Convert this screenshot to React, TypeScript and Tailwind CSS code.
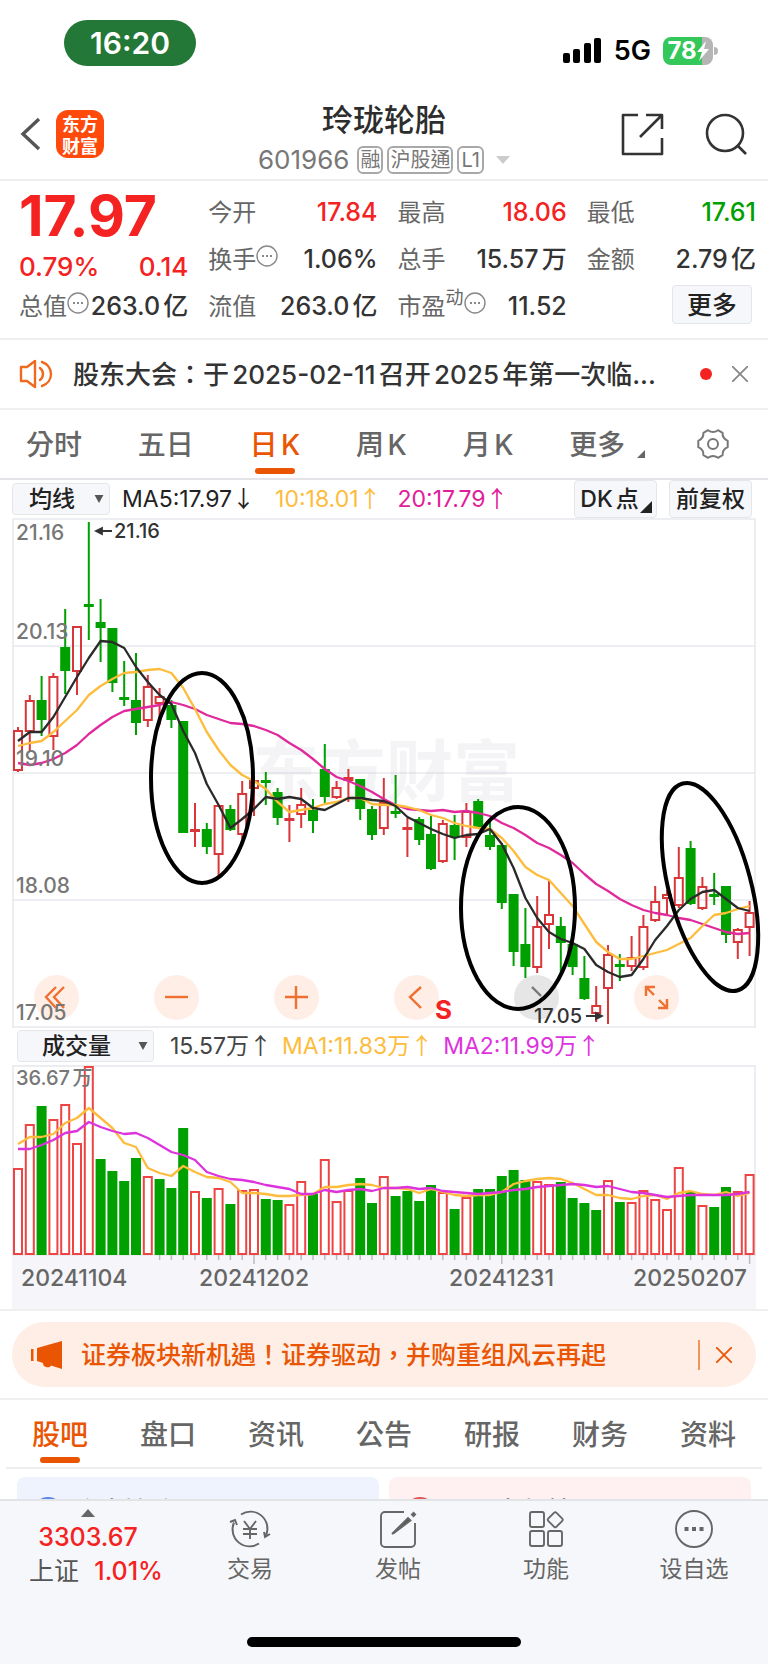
import { useState } from "react";
import type { ReactNode } from "react";
import clsx from "clsx";

type Kind = "up" | "down";
// kind, high, body top, body bottom, low
type Candle = [Kind, number, number, number, number];
type Volume = [Kind, number];

const STEP = 11.8;
const PRICE_HEIGHT = 509;
const VOLUME_HEIGHT = 190;
const AXIS_HEIGHT = 54;

const candles: Candle[] = [
  ["up", 209, 212, 253, 254], ["up", 177, 182, 214, 234], ["down", 158, 182, 202, 218], ["up", 155, 158, 219, 232],
  ["down", 91, 129, 153, 176], ["up", 108, 108, 154, 177], ["down", 4, 86, 88, 122], ["down", 81, 104, 110, 144],
  ["down", 110, 110, 165, 174], ["down", 143, 179, 181, 188], ["down", 135, 182, 205, 217], ["up", 157, 168, 203, 209],
  ["up", 170, 178, 186, 207], ["down", 182, 187, 202, 210], ["down", 203, 203, 315, 315], ["up", 285, 311, 313, 329],
  ["down", 305, 311, 329, 336], ["up", 287, 287, 337, 360], ["down", 287, 291, 312, 313], ["up", 263, 275, 317, 321],
  ["up", 260, 262, 271, 298], ["down", 254, 262, 264, 287], ["down", 270, 274, 300, 307], ["up", 287, 300, 302, 324],
  ["up", 270, 286, 297, 310], ["down", 281, 292, 303, 315], ["down", 226, 251, 279, 285], ["up", 263, 269, 280, 281],
  ["up", 251, 259, 263, 284], ["down", 261, 261, 291, 302], ["down", 288, 291, 317, 322], ["up", 260, 284, 311, 317],
  ["down", 257, 293, 295, 300], ["up", 300, 309, 311, 339], ["down", 299, 301, 322, 327], ["down", 298, 316, 351, 352],
  ["up", 302, 305, 344, 345], ["down", 297, 307, 319, 342], ["up", 285, 293, 320, 329], ["down", 281, 283, 310, 311],
  ["down", 304, 317, 329, 332], ["down", 325, 327, 385, 391], ["down", 376, 376, 434, 448], ["down", 390, 426, 449, 460],
  ["up", 378, 408, 450, 455], ["up", 362, 396, 407, 431], ["down", 399, 408, 425, 455], ["down", 425, 426, 449, 457],
  ["down", 438, 460, 481, 482], ["up", 468, 487, 496, 504], ["up", 427, 436, 471, 506], ["down", 436, 446, 448, 463],
  ["up", 418, 439, 449, 453], ["up", 397, 408, 450, 452], ["up", 368, 383, 403, 404], ["up", 372, 376, 381, 398],
  ["up", 329, 359, 388, 390], ["down", 323, 330, 386, 387], ["up", 359, 368, 391, 392], ["down", 355, 376, 377, 387],
  ["down", 368, 368, 417, 425], ["up", 410, 411, 425, 441], ["up", 383, 394, 410, 438],
];

const ma5 = [
  223, 214, 214, 199, 179, 159, 140, 123, 124, 130, 149, 164, 177, 186, 213, 235, 266, 287, 310, 301, 291, 279, 281, 279, 281, 290, 292, 286, 280, 280, 282,
  283, 288, 299, 305, 311, 316, 320, 317, 316, 311, 326, 350, 380, 400, 414, 421, 425, 431, 447, 454, 459, 457, 441, 422, 408, 392, 381, 374, 372, 381, 390, 393,
];
const ma10 = [
  228, 225, 223, 214, 203, 192, 177, 168, 161, 155, 154, 152, 151, 155, 170, 191, 214, 232, 247, 257, 263, 271, 284, 294, 292, 290, 286, 284, 280, 280, 286,
  287, 287, 289, 292, 297, 300, 305, 308, 310, 311, 320, 333, 349, 357, 362, 375, 388, 406, 424, 434, 441, 441, 438, 435, 432, 426, 420, 408, 397, 395, 391, 388,
];
const ma20 = [
  245, 247, 245, 241, 235, 227, 216, 207, 199, 193, 191, 189, 187, 184, 187, 191, 197, 201, 205, 206, 208, 212, 217, 225, 232, 241, 251, 259, 263, 268, 274,
  281, 287, 291, 292, 293, 292, 294, 293, 295, 298, 305, 310, 317, 325, 330, 337, 345, 356, 366, 373, 381, 387, 392, 395, 397, 400, 402, 406, 410, 414, 416, 415,
];

const volumes: Volume[] = [
  ["up", 103], ["up", 59], ["down", 41], ["up", 54], ["up", 39], ["up", 78], ["up", 1], ["down", 94], ["down", 106],
  ["down", 116], ["down", 93], ["up", 111], ["down", 114], ["down", 123], ["down", 63], ["up", 126], ["down", 133], ["up", 123],
  ["down", 139], ["up", 125], ["up", 124], ["down", 134], ["down", 135], ["up", 139], ["up", 116], ["down", 129], ["up", 94],
  ["up", 136], ["up", 125], ["down", 113], ["down", 138], ["up", 111], ["down", 131], ["down", 126], ["down", 136], ["down", 120],
  ["up", 127], ["down", 144], ["up", 132], ["down", 124], ["down", 124], ["down", 111], ["down", 105], ["down", 115], ["up", 116],
  ["up", 119], ["down", 117], ["down", 133], ["down", 138], ["down", 145], ["up", 115], ["down", 137], ["up", 137], ["up", 125],
  ["up", 134], ["up", 144], ["up", 102], ["down", 127], ["up", 140], ["down", 142], ["down", 122], ["up", 126], ["up", 109],
];
const volMa1 = [
  79, 72, 72, 69, 58, 53, 43, 53, 63, 78, 82, 103, 108, 111, 101, 107, 112, 113, 117, 128, 128, 129, 131, 131, 130, 129, 122, 122, 120, 119, 120,
  123, 123, 124, 128, 124, 127, 130, 131, 130, 130, 127, 119, 116, 114, 113, 114, 118, 124, 130, 130, 133, 134, 131, 130, 134, 128, 126, 129, 130, 127, 131, 128,
];
const volMa2 = [
  84, 84, 80, 75, 68, 66, 57, 62, 66, 69, 68, 73, 80, 87, 90, 95, 107, 111, 114, 115, 117, 120, 122, 124, 129, 129, 125, 127, 125, 124, 126,
  123, 123, 122, 124, 123, 126, 127, 128, 129, 128, 127, 125, 124, 122, 121, 120, 119, 120, 122, 121, 124, 127, 128, 130, 132, 131, 130, 130, 130, 130, 129, 127,
];

const RED = "#d9363a";
const GREEN = "#00a000";

const xAt = (i: number) => 6 + i * STEP;
const toPoints = (values: number[]) => values.map((y, i) => `${xAt(i).toFixed(1)},${y}`).join(" ");

function MoreDots() {
  return (
    <svg viewBox="0 0 22 22" className="-mt-2 h-[22px] w-[22px] shrink-0" fill="none" stroke="#888" strokeWidth="1.4">
      <circle cx="11" cy="11" r="10" />
      <path d="M6 11h2M10 11h2M14 11h2" strokeWidth="2" />
    </svg>
  );
}

function StatusBar() {
  return (
    <div className="flex h-[88px] items-start justify-between pt-5 pr-[50px] pl-16">
      <div className="flex h-[46px] w-[132px] items-center justify-center rounded-full bg-[#237837] text-3xl font-semibold text-white">16:20</div>
      <div className="flex h-[62px] items-center gap-3">
        <svg viewBox="0 0 40 26" className="h-[26px] w-10">
          <rect x="1" y="15" width="7" height="10" rx="2" />
          <rect x="11" y="11" width="7" height="14" rx="2" />
          <rect x="22" y="5" width="7" height="20" rx="2" />
          <rect x="32" y="0" width="7" height="25" rx="2" />
        </svg>
        <span className="text-[27px] font-semibold text-black">5G</span>
        <div className="flex items-center gap-px">
          <div className="flex h-7 w-[50px] items-center justify-center rounded-lg bg-linear-to-r from-[#34c759] from-78% to-[#b5b5b5] to-78% text-2xl font-bold text-white">
            78
            <svg viewBox="0 0 12 20" className="h-5 w-3" fill="#fff">
              <path d="M9 0 0 11h5l-3 9L12 8H7z" />
            </svg>
          </div>
          <div className="h-2 w-1 rounded-r-full bg-[#b5b5b5]" />
        </div>
      </div>
    </div>
  );
}

function Header() {
  return (
    <header className="grid h-[93px] grid-cols-[1fr_auto_1fr] border-b-2 border-[#efefef] px-5">
      <div className="flex items-center gap-3.5">
        <button aria-label="返回">
          <svg viewBox="0 0 22 36" className="h-9 w-[22px]" fill="none" stroke="#555" strokeWidth="3.4">
            <path d="M19 3 3 18l16 15" />
          </svg>
        </button>
        <div className="w-12 rounded-xl bg-[#ff4a0c] py-0.5 text-center font-['Noto_Sans_CJK_SC',sans-serif] text-lg leading-[22px] font-bold text-white">
          东方<br />财富
        </div>
      </div>
      <div className="flex flex-col items-center pt-3">
        <h1 className="text-[31px] leading-10 font-medium text-[#2d2d2d]">玲珑轮胎</h1>
        <div className="flex items-center gap-1 pt-1 text-[#777]">
          <span className="mr-1 text-[26px] leading-8">601966</span>
          <span className="rounded-md border-2 border-[#a8a8a8] px-px text-xl leading-6">融</span>
          <span className="rounded-md border-2 border-[#a8a8a8] px-px text-xl leading-6">沪股通</span>
          <span className="rounded-md border-2 border-[#a8a8a8] px-0.5 text-xl leading-6">L1</span>
          <svg viewBox="0 0 14 8" className="ml-2 h-2 w-3.5" fill="#ccc">
            <path d="M0 0h14L7 8z" />
          </svg>
        </div>
      </div>
      <div className="flex items-center justify-end gap-10">
        <button aria-label="分享">
          <svg viewBox="0 0 44 44" className="h-11 w-11" fill="none" stroke="#333" strokeWidth="2.6" strokeLinejoin="round">
            <path d="M18 3H3v39h39V26M26 3h16v14M42 3 20 25" />
          </svg>
        </button>
        <button aria-label="搜索">
          <svg viewBox="0 0 44 44" className="h-11 w-11" fill="none" stroke="#333" strokeWidth="2.6">
            <circle cx="21" cy="21" r="18" />
            <path d="m33 33 9 9" />
          </svg>
        </button>
      </div>
    </header>
  );
}

function Quote({ label, value, tone = "text-[#333]", extra, sup }: { label: string; value: string; tone?: string; extra?: boolean; sup?: string }) {
  return (
    <div className="flex items-center justify-between whitespace-nowrap">
      <dt className="flex items-center text-[#666]">
        {label}
        {sup && <sup className="text-lg">{sup}</sup>}
        {extra && <MoreDots />}
      </dt>
      <dd className={clsx("text-[25px] font-medium", tone)}>{value}</dd>
    </div>
  );
}

function QuotePanel() {
  return (
    <section className="grid h-[159px] grid-cols-4 gap-x-5 border-b-2 border-[#efefef] pt-2 pr-3 pl-[19px] text-2xl leading-[47px]">
      <div>
        <div className="h-[61px] text-[57px] leading-[54px] font-bold text-[#f52222]">17.97</div>
        <div className="flex h-[33px] items-center justify-between text-[26px] font-medium text-[#f52222]">
          <span>0.79%</span>
          <span>0.14</span>
        </div>
        <dl><Quote label="总值" value="263.0亿" extra /></dl>
      </div>
      <dl>
        <Quote label="今开" value="17.84" tone="text-[#f52222]" />
        <Quote label="换手" value="1.06%" extra />
        <Quote label="流值" value="263.0亿" />
      </dl>
      <dl>
        <Quote label="最高" value="18.06" tone="text-[#f52222]" />
        <Quote label="总手" value="15.57万" />
        <Quote label="市盈" value="11.52" sup="动" extra />
      </dl>
      <div>
        <dl>
          <Quote label="最低" value="17.61" tone="text-[#00a000]" />
          <Quote label="金额" value="2.79亿" />
        </dl>
        <div className="flex justify-end pt-0.5 pr-1">
          <button className="h-[39px] w-20 rounded border border-[#e4e6ea] bg-[#f6f7fa] text-[25px] leading-9 font-medium text-[#222]">更多</button>
        </div>
      </div>
    </section>
  );
}

function Notice() {
  return (
    <section className="flex h-[70px] items-center border-b-2 border-[#efefef] pr-5 pl-[19px]">
      <svg viewBox="0 0 34 30" className="h-[30px] w-[34px] shrink-0" fill="none" stroke="#ee6a1e" strokeWidth="2.4" strokeLinejoin="round" strokeLinecap="round">
        <path d="M2 8h6l8-6v26l-8-6H2zM21 9c4 3 4 9 0 12M23 3c12 4 12 20 0 24" />
      </svg>
      <a href="#notice" className="ml-5 flex-1 truncate text-[26px] font-medium text-[#333]">股东大会：于2025-02-11召开2025年第一次临...</a>
      <span className="mr-5 h-3 w-3 rounded-full bg-[#f52222]" />
      <button aria-label="关闭公告">
        <svg viewBox="0 0 16 16" className="h-4 w-4" stroke="#888" strokeWidth="1.8">
          <path d="m0 0 16 16M16 0 0 16" />
        </svg>
      </button>
    </section>
  );
}

function PeriodTabs() {
  const [active, setActive] = useState("日K");
  return (
    <nav className="flex h-[70px] items-stretch justify-between border-b-2 border-[#e4e4e8] pr-[39px] pl-[26px] text-[28px] font-medium">
      {["分时", "五日", "日K", "周K", "月K", "更多"].map((tab) => (
        <button key={tab} onClick={() => setActive(tab)} className={clsx("relative pt-0.5", active === tab ? "text-[#ea5504]" : "text-[#666]")}>
          {tab}
          {tab === "更多" && (
            <svg viewBox="0 0 8 8" className="absolute -right-5 bottom-5 h-2 w-2" fill="#666">
              <path d="M8 0v8H0z" />
            </svg>
          )}
          {active === tab && <span className="absolute bottom-1 left-1/2 h-1.5 w-10 -translate-x-1/2 rounded-full bg-[#ea5504]" />}
        </button>
      ))}
      <button aria-label="设置" className="ml-4">
        <svg viewBox="0 0 32 32" className="h-8 w-8" fill="none" stroke="#777" strokeWidth="2" strokeLinejoin="round">
          <circle cx="16" cy="16" r="5" />
          <path d="M11 2.2q5 3.6 10 0l4.6 2.6q-.4 5.6 5.1 8v6.4q-5.5 2.4-5.1 8L21 29.8q-5-3.6-10 0l-4.6-2.6q.4-5.6-5.1-8v-6.4q5.500-2.400 5.100-8z" />
        </svg>
      </button>
    </nav>
  );
}

function Picker({ label, value, className }: { label: string; value: string; className: string }) {
  return (
    <div className={clsx("relative", className)}>
      <select aria-label={label} className="h-8 w-full appearance-none rounded border border-[#e4e6ea] bg-[#f6f7fa] pr-[18px] text-center text-[23px] leading-7 font-medium text-[#222]">
        <option>{value}</option>
      </select>
      <svg viewBox="0 0 10 9" className="pointer-events-none absolute top-3 right-1.5 h-2 w-2.5" fill="#555">
        <path d="M0 0h10L5 9z" />
      </svg>
    </div>
  );
}

function Indicator({ value, trend, className }: { value: string; trend: "↑" | "↓"; className: string }) {
  return (
    <span className={clsx("text-[23px] whitespace-nowrap [text-autospace:no-autospace]", className)}>
      {value}
      <span className="font-['Noto_Sans_CJK_SC',sans-serif] leading-8">{trend}</span>
    </span>
  );
}

function IndicatorBar() {
  return (
    <div className="flex h-[38px] items-center pr-4 pl-3">
      <Picker label="主图指标" value="均线" className="w-[98px]" />
      <Indicator value="MA5:17.97" trend="↓" className="ml-3 text-[#222]" />
      <Indicator value="10:18.01" trend="↑" className="ml-5 text-[#fdbc3c]" />
      <Indicator value="20:17.79" trend="↑" className="ml-4 text-[#e0209a]" />
      <button className="relative ml-auto h-[38px] w-[83px] rounded border border-[#e4e6ea] bg-[#f6f7fa] pr-3 text-[23px] leading-8 font-medium text-[#222]">
        DK点
        <svg viewBox="0 0 12 12" className="absolute right-1 bottom-1 h-3 w-3" fill="#222">
          <path d="M12 0v12H0z" />
        </svg>
      </button>
      <button className="ml-3 h-[38px] w-[83px] rounded border border-[#e4e6ea] bg-[#f6f7fa] text-[23px] leading-8 font-medium text-[#222]">前复权</button>
    </div>
  );
}

function ChartButton({ label, muted, children }: { label: string; muted?: boolean; children: ReactNode }) {
  return (
    <button aria-label={label} className={clsx("h-[45px] w-[45px] rounded-full", muted ? "bg-[#e6e6e6]" : "bg-[#feeee5]")}>
      <svg viewBox="0 0 45 45" fill="none" stroke={muted ? "#777" : "#f07030"} strokeWidth="2.4">
        {children}
      </svg>
    </button>
  );
}

function PriceChart() {
  return (
    <div className="relative mx-3">
      <div className="absolute inset-x-[22px] bottom-[7px] flex justify-between pr-[55px]">
        <ChartButton label="最早"><path d="M22 12 12 22l10 11M30 12 20 22l10 11" /></ChartButton>
        <ChartButton label="缩小"><path d="M11 22h23" /></ChartButton>
        <ChartButton label="放大"><path d="M11 22h23M22 11v23" /></ChartButton>
        <ChartButton label="向左"><path d="M27 12 16 22l11 11" /></ChartButton>
        <ChartButton label="向右" muted><path d="m18 12 9 9" /></ChartButton>
        <ChartButton label="全屏"><path d="M21 12h-9v9M12 12l8 8M24 33h9v-9M33 33l-8-8" /></ChartButton>
      </div>
      <svg viewBox={`0 0 744 ${PRICE_HEIGHT}`} className="pointer-events-none relative block h-auto w-full overflow-visible font-medium">
        <g stroke="#e8e9ee" strokeWidth="1.5" fill="none">
          <rect x="1" y="1" width="742" height={PRICE_HEIGHT - 1} />
          <path d="M0 128h744M0 255h744M0 382h744" />
        </g>
        <text x="240" y="278" fontSize="67" fontWeight="700" fill="#c8c8d0" fillOpacity="0.2">东方财富</text>
        {candles.map(([kind, high, top, bottom, low], i) => {
          const x = xAt(i);
          const color = kind === "up" ? RED : GREEN;
          return (
            <g key={i} stroke={color} strokeWidth="2" fill={kind === "up" ? "none" : color}>
              <path d={`M${x} ${high}V${top}M${x} ${bottom}V${low}`} />
              <rect x={x - 4} y={top + 1} width="8" height={Math.max(bottom - top - 2, 1)} />
            </g>
          );
        })}
        <g fill="none" strokeWidth="2.3" strokeLinejoin="round">
          <polyline points={toPoints(ma20)} stroke="#e02a9c" />
          <polyline points={toPoints(ma10)} stroke="#fdbc3c" />
          <polyline points={toPoints(ma5)} stroke="#2a2a2a" />
        </g>
        <g fill="none" stroke="#000" strokeWidth="4">
          <ellipse cx="190" cy="260" rx="51" ry="105" />
          <ellipse cx="506" cy="390" rx="57" ry="101" />
          <ellipse cx="698" cy="369" rx="41" ry="107" transform="rotate(-14.8 698 369)" />
        </g>
        <g fontSize="21" fill="#777">
          <text x="4" y="22">21.16</text>
          <text x="4" y="121">20.13</text>
          <text x="4" y="248">19.10</text>
          <text x="4" y="375">18.08</text>
          <text x="4" y="502">17.05</text>
        </g>
        <g fontSize="20" fill="#333">
          <text x="102" y="20">21.16</text>
          <text x="522" y="505">17.05</text>
        </g>
        <text x="423" y="501" fontSize="26" fontWeight="700" fill="#f52222">S</text>
        <g stroke="#333" strokeWidth="1.8" fill="#333">
          <path d="M84 13h16M90 10l-6 3 6 3z" />
          <path d="M574 498h15M584 495l6 3-6 3z" />
        </g>
      </svg>
    </div>
  );
}

function VolumeChart() {
  return (
    <div className="mx-3 bg-[#f6f6fa]">
      <svg viewBox={`0 0 744 ${VOLUME_HEIGHT + AXIS_HEIGHT}`} className="block h-auto w-full font-medium">
        <rect x="1" y="1" width="742" height={VOLUME_HEIGHT - 1} fill="#fff" stroke="#e8e9ee" strokeWidth="1.5" />
        {volumes.map(([kind, top], i) => (
          <rect
            key={i}
            x={xAt(i) - 4}
            y={top + 1}
            width="8"
            height={VOLUME_HEIGHT - top - 2}
            strokeWidth="2"
            stroke={kind === "up" ? "#ee4444" : GREEN}
            fill={kind === "up" ? "#fff" : GREEN}
          />
        ))}
        <text x="4" y="20" fontSize="20" fill="#777">36.67万</text>
        <g fill="none" strokeWidth="2.3" strokeLinejoin="round">
          <polyline points={toPoints(volMa1)} stroke="#fdbc3c" />
          <polyline points={toPoints(volMa2)} stroke="#dd33dd" />
        </g>
        <g stroke="#bbb" strokeWidth="1.5">
          {volumes.map((_, i) => i > 11 && <path key={i} d={`M${xAt(i)} 190v${i % 21 === 20 ? 9 : 5}`} />)}
        </g>
        <g fontSize="23" fill="#666">
          <text x="9" y="221">20241104</text>
          <text x="187" y="221">20241202</text>
          <text x="437" y="221">20241231</text>
          <text x="735" y="221" textAnchor="end">20250207</text>
        </g>
      </svg>
    </div>
  );
}

function PromoBanner() {
  return (
    <div className="border-y-2 border-[#efefef] px-3 py-[11px]">
      <div className="flex h-[65px] items-center rounded-full bg-[#feeee5] pr-6 pl-[19px] text-[#ea5504]">
        <svg viewBox="0 0 32 28" className="h-7 w-8 shrink-0" fill="#ea5504">
          <path d="M0 8h2.500v12H0zM6 7 31 0v28l-11-3.500c-1 3-8 2.500-8-2.500l-6-2z" />
        </svg>
        <a href="#promo" className="ml-[18px] flex-1 truncate pt-0.5 text-[25px] font-medium">证券板块新机遇！证券驱动，并购重组风云再起</a>
        <span className="mr-4 h-[30px] w-0.5 bg-[#ea5504]/60" />
        <button aria-label="关闭推广">
          <svg viewBox="0 0 16 16" className="h-4 w-4" stroke="#ea5504" strokeWidth="1.8">
            <path d="m0 0 16 16M16 0 0 16" />
          </svg>
        </button>
      </div>
    </div>
  );
}

function SectionTabs() {
  const [active, setActive] = useState("股吧");
  return (
    <nav className="mx-1.5 flex h-[69px] justify-between border-b-2 border-[#efefef] px-[26px] text-[28px] font-medium">
      {["股吧", "盘口", "资讯", "公告", "研报", "财务", "资料"].map((tab) => (
        <button key={tab} onClick={() => setActive(tab)} className={clsx("relative pt-0.5", active === tab ? "text-[#ea5504]" : "text-[#666]")}>
          {tab}
          {active === tab && <span className="absolute bottom-1 left-1/2 h-1.5 w-10 -translate-x-1/2 rounded-full bg-[#ea5504]" />}
        </button>
      ))}
    </nav>
  );
}

function TopicCards() {
  return (
    <div className="grid grid-cols-2 gap-2.5 px-[17px] pt-2 text-[26px] leading-8 font-medium text-[#333]">
      <div className="flex h-[70px] items-center gap-2 rounded-lg bg-[#eef3fe] pl-4">
        <span className="h-[30px] w-[30px] rounded-full bg-[#5b86ec]" />
        玲珑轮胎
      </div>
      <div className="flex h-[70px] items-center gap-2 rounded-lg bg-[#fff1f2] pl-4">
        <span className="h-[30px] w-[30px] rounded-full bg-[#e05555]" />
        股票大年榜
      </div>
    </div>
  );
}

function ToolbarItem({ label, children }: { label: string; children: ReactNode }) {
  return (
    <button className="flex flex-col items-center gap-0.5 text-[23px] leading-9 text-[#666]">
      <svg viewBox="0 0 42 40" className="h-10 w-[42px]" fill="none" stroke="#666" strokeWidth="1.9">
        {children}
      </svg>
      {label}
    </button>
  );
}

function BottomBar() {
  return (
    <footer className="fixed inset-x-0 bottom-0 flex h-[165px] flex-col justify-between border-t-2 border-[#e2e4e8] bg-[#f6f7fa] pb-[17px]">
      <div className="grid grid-cols-[176px_1fr_1fr_1fr_1fr] pt-2">
        <button className="flex flex-col items-center text-[25px] font-medium text-[#f52222]">
          <svg viewBox="0 0 14 8" className="h-2 w-3.5" fill="#666">
            <path d="M0 8h14L7 0z" />
          </svg>
          <span className="pt-1 leading-8">3303.67</span>
          <span className="ml-4 leading-9"><span className="mr-3 font-normal text-[#555]">上证</span>1.01%</span>
        </button>
        <ToolbarItem label="交易">
          <path d="M12 5.500a17 17 0 0 1 25 21M30 34.500a17 17 0 0 1-25-21M1 13l5-2 2 5M41 25l-5 3-1-5" />
          <path d="m15 12 6 8 6-8M21 20v10M14 20h14M14 25h14" />
        </ToolbarItem>
        <ToolbarItem label="发帖">
          <path d="M27 3H8a4 4 0 0 0-4 4v27a4 4 0 0 0 4 4h26a4 4 0 0 0 4-4V14" />
          <path d="M15 25 31 9l2.500 2.500L17 24z" fill="#555" />
          <path d="m35 7 3-3" strokeWidth="4" />
        </ToolbarItem>
        <ToolbarItem label="功能">
          <rect x="5" y="3" width="14" height="15" rx="2" />
          <rect x="5" y="22" width="14" height="15" rx="2" />
          <rect x="23" y="22" width="14" height="15" rx="2" />
          <rect x="24.500" y="5" width="11.500" height="11.500" rx="1.500" transform="rotate(45 30.250 10.750)" />
        </ToolbarItem>
        <ToolbarItem label="设自选">
          <circle cx="21" cy="20" r="18" />
          <path d="M11.500 20h4M19 20h4M26.500 20h4" strokeWidth="4" />
        </ToolbarItem>
      </div>
      <div className="mx-auto h-2.5 w-[274px] rounded-full bg-black" />
    </footer>
  );
}

export default function App() {
  return (
    <div className="min-h-screen bg-white font-[Inter,'Noto_Sans_CJK_TC',sans-serif] [text-autospace:normal]">
      <StatusBar />
      <Header />
      <QuotePanel />
      <Notice />
      <PeriodTabs />
      <IndicatorBar />
      <PriceChart />
      <div className="flex h-[38px] items-center pr-4 pl-[17px]">
        <Picker label="副图指标" value="成交量" className="w-[137px]" />
        <Indicator value="15.57万" trend="↑" className="ml-4 text-[#444]" />
        <Indicator value="MA1:11.83万" trend="↑" className="ml-2.5 text-[#fdbc3c]" />
        <Indicator value="MA2:11.99万" trend="↑" className="ml-2.5 text-[#dd33dd]" />
      </div>
      <VolumeChart />
      <PromoBanner />
      <SectionTabs />
      <TopicCards />
      <BottomBar />
    </div>
  );
}
